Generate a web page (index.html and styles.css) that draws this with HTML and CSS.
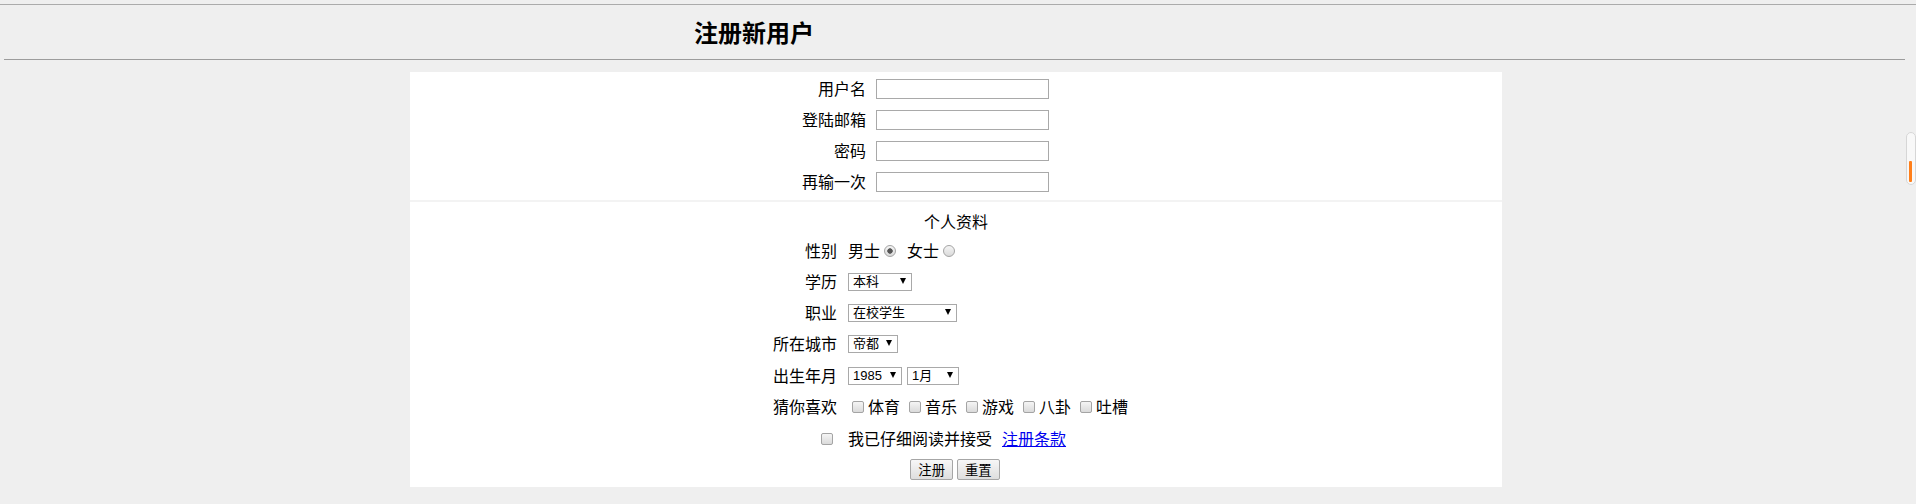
FILE: index.html
```html
<!DOCTYPE html>
<html lang="zh-CN">
<head>
<meta charset="utf-8">
<title>注册新用户</title>
<link rel="stylesheet" href="styles.css">
</head>
<body>
<div class="topline"></div>
<header class="header"><h1 class="title">注册新用户</h1></header>
<hr class="rule">
<form class="panel">
  <section class="block account">
    <label class="lbl" for="uname">用户名</label><input class="txt" id="uname" type="text">
    <label class="lbl" for="email">登陆邮箱</label><input class="txt" id="email" type="text">
    <label class="lbl" for="pwd">密码</label><input class="txt" id="pwd" type="password">
    <label class="lbl" for="pwd2">再输一次</label><input class="txt" id="pwd2" type="password">
  </section>
  <section class="block profile">
    <div class="caption">个人资料</div>

    <span class="lbl">性别</span>
    <div class="ctl"><span>男士</span><input type="radio" class="radio" name="sex" checked><span class="opt2">女士</span><input type="radio" class="radio" name="sex"></div>

    <span class="lbl">学历</span>
    <div class="ctl"><span class="sel-wrap"><select class="sel w-edu"><option>本科</option></select></span></div>

    <span class="lbl">职业</span>
    <div class="ctl"><span class="sel-wrap"><select class="sel w-job"><option>在校学生</option></select></span></div>

    <span class="lbl">所在城市</span>
    <div class="ctl"><span class="sel-wrap"><select class="sel w-city"><option>帝都</option></select></span></div>

    <span class="lbl">出生年月</span>
    <div class="ctl"><span class="sel-wrap"><select class="sel w-year"><option>1985</option></select></span><span class="sel-wrap month"><select class="sel w-month"><option>1月</option></select></span></div>

    <span class="lbl">猜你喜欢</span>
    <div class="ctl">
      <input type="checkbox" class="check"><span class="item">体育</span>
      <input type="checkbox" class="check"><span class="item">音乐</span>
      <input type="checkbox" class="check"><span class="item">游戏</span>
      <input type="checkbox" class="check"><span class="item">八卦</span>
      <input type="checkbox" class="check"><span class="item">吐槽</span>
    </div>

    <div class="lbl"><input type="checkbox" class="check agree"></div>
    <div class="ctl"><span>我已仔细阅读并接受</span><a class="terms" href="#">注册条款</a></div>

    <div class="actions"><button type="submit" class="btn">注册</button><button type="reset" class="btn">重置</button></div>
  </section>
</form>
<div class="scroll-indicator"><span class="thumb"></span></div>
</body>
</html>
```

FILE: styles.css
```css
html, body {
  margin: 0;
  padding: 0;
}
body {
  background: #efefef;
  font-family: "Noto Sans CJK SC", "Liberation Sans", sans-serif;
  font-size: 16px;
  color: #000;
  overflow: hidden;
}
.topline {
  height: 4px;
  border-bottom: 1px solid #ababab;
}
.header {
  height: 54px;
  display: flex;
  align-items: center;
  padding-left: 694px;
}
.title {
  margin: 0;
  font-size: 24px;
  font-weight: bold;
  line-height: 30px;
}
.rule {
  margin: 0 11px 0 4px;
  height: 0;
  border: 0;
  border-top: 1px solid #9c9c9c;
}
.panel {
  margin: 12px 0 0 410px;
  width: 1092px;
  display: flex;
  flex-direction: column;
  gap: 2px;
  background: #f3f3f3;
}
.block {
  background: #fff;
  display: grid;
  align-items: center;
}
.account {
  grid-template-columns: 456px 173px;
  grid-auto-rows: 31px;
  column-gap: 10px;
  padding: 1px 0 3px;
}
.profile {
  grid-template-columns: 427px 1fr;
  grid-template-rows: 27px 31px 31px 31px 32px 31px 32px 31px 31px;
  column-gap: 11px;
  padding: 6px 0 2px;
}
.lbl {
  text-align: right;
  line-height: 20px;
  padding-bottom: 2px;
  white-space: nowrap;
}
.txt {
  box-sizing: border-box;
  width: 173px;
  height: 20px;
  margin: 0;
  padding: 0 2px;
  border: 1px solid #a9a9a9;
  background: #fff;
  font: 13px "Liberation Sans", sans-serif;
}
.caption {
  grid-column: 1 / -1;
  text-align: center;
  line-height: 20px;
  padding-bottom: 2px;
}
.ctl {
  display: flex;
  align-items: center;
  line-height: 20px;
  white-space: nowrap;
}
.ctl > span:not(.sel-wrap), .ctl > .terms {
  padding-bottom: 2px;
}
.radio, .check {
  -webkit-appearance: none;
  appearance: none;
  box-sizing: border-box;
  width: 12px;
  height: 12px;
  margin: 0;
  border: 1px solid #a4a4a4;
  background: linear-gradient(#f5f5f5, #dadada);
  flex: none;
}
.radio {
  border-radius: 50%;
  margin-left: 4px;
}
.radio:checked {
  background: radial-gradient(circle, #555 0 2.4px, transparent 3px), linear-gradient(#f5f5f5, #dadada);
}
.check {
  border-radius: 2px;
  margin: 0 4px;
}
.opt2 {
  margin-left: 11px;
}
.item {
  margin-right: 5px;
}
.lbl .agree {
  margin: 4px 4px 0 0;
}
.terms {
  margin-left: 10px;
  color: #0000ee;
  text-decoration: underline;
}
.sel-wrap {
  position: relative;
  display: flex;
  height: 18px;
}
.sel-wrap::after {
  content: "";
  position: absolute;
  right: 6px;
  top: 5px;
  border-left: 3.5px solid transparent;
  border-right: 3.5px solid transparent;
  border-top: 6px solid #000;
  pointer-events: none;
}
.month {
  margin-left: 5px;
}
.sel {
  -webkit-appearance: none;
  appearance: none;
  display: block;
  box-sizing: border-box;
  height: 18px;
  margin: 0;
  padding: 0 0 0 4px;
  border: 1px solid #a9a9a9;
  border-radius: 0;
  background: #fff;
  color: #000;
  font: 13px/16px "Liberation Sans", "Noto Sans CJK SC", sans-serif;
}
.w-edu { width: 64px; }
.w-job { width: 109px; }
.w-city { width: 50px; }
.w-year { width: 54px; }
.w-month { width: 52px; }
.actions {
  grid-column: 1 / -1;
  display: flex;
  justify-content: center;
  gap: 4px;
  padding-right: 2px;
}
.btn {
  height: 21px;
  margin: 0;
  padding: 0 7px;
  border: 1px solid #a6a6a6;
  border-radius: 2px;
  background: linear-gradient(#f7f7f7, #dedede);
  color: #000;
  font: 13.33px/17px "Noto Sans CJK SC", sans-serif;
}
.scroll-indicator {
  position: fixed;
  left: 1906px;
  top: 132px;
  box-sizing: border-box;
  width: 10px;
  height: 53px;
  border: 1px solid #d6d6d6;
  border-radius: 5px;
  background: #f8f8f8;
}
.thumb {
  position: absolute;
  left: 2px;
  top: 28px;
  width: 3px;
  height: 21px;
  border-radius: 1px;
  background: #ff7f1a;
}
```
